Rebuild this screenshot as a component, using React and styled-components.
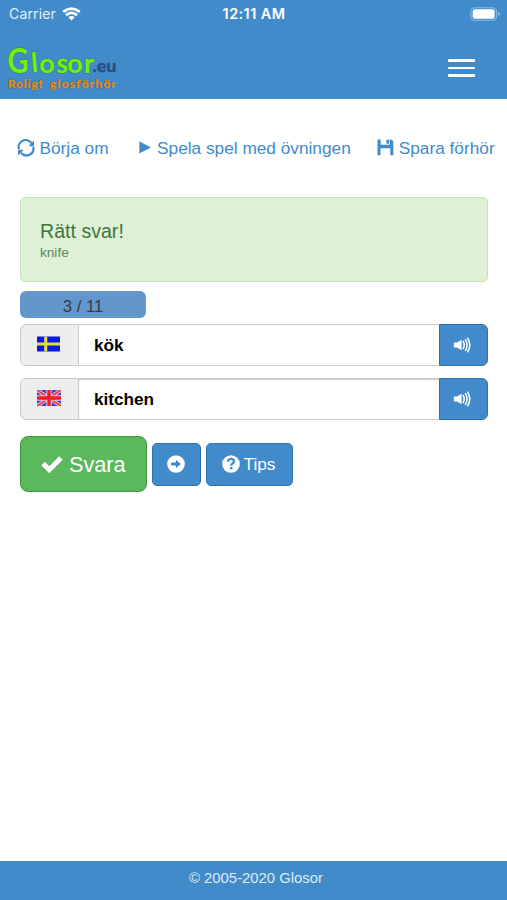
import React from "react";
import styled, { createGlobalStyle } from "styled-components";

const GlobalStyle = createGlobalStyle`
  * { box-sizing: border-box; }
  body { margin: 0; background: #fff; }
`;

const Screen = styled.div`
  width: 507px;
  height: 900px;
  display: flex;
  flex-direction: column;
  overflow: hidden;
  background: #fff;
  font-family: "Liberation Sans", Arial, sans-serif;
  color: #333;
  svg { display: block; flex: none; }
`;

const Header = styled.header`
  height: 98.5px;
  flex: none;
  background: #428bca;
  border-bottom: 1px solid #4f93cd;
`;

const StatusBar = styled.div`
  height: 28px;
  display: grid;
  grid-template-columns: 1fr auto 1fr;
  align-items: center;
  padding: 0 6px 0 9px;
  font-family: Inter, sans-serif;
  color: #fff;
`;

const Carrier = styled.div`
  display: flex;
  align-items: center;
  gap: 6px;
  font-size: 14px;
  line-height: 28px;
  letter-spacing: 0.15px;
  color: #e4f0fa;
`;

const Clock = styled.div`
  margin-right: 2px;
  font-size: 14.4px;
  font-weight: 600;
  line-height: 28px;
  letter-spacing: 0.45px;
`;

const Battery = styled.div`
  justify-self: end;
`;

const NavBar = styled.div`
  height: 70px;
  display: flex;
  justify-content: space-between;
  padding: 12px 32px 0 5px;
`;

const MenuButton = styled.button`
  height: 18px;
  width: 27px;
  margin-top: 19px;
  padding: 0;
  border: 0;
  background: none;
  display: flex;
  flex-direction: column;
  justify-content: space-between;
`;

const MenuLine = styled.span`
  height: 2.6px;
  border-radius: 1px;
  background: #fff;
`;

const Actions = styled.nav`
  display: flex;
  height: 22px;
  margin-top: 38px;
  padding-left: 17px;
`;

const Action = styled.a`
  display: flex;
  align-items: center;
  gap: ${(p) => p.$gap}px;
  margin-right: ${(p) => p.$after || 0}px;
  font-size: 17.25px;
  line-height: 22px;
  white-space: nowrap;
  color: #428bca;
`;

const Main = styled.main`
  flex: 1;
  padding: 38.5px 19px 0 20px;
`;

const Alert = styled.section`
  height: 85px;
  padding: 21px 19px;
  border: 1.5px solid #c3e3b4;
  border-radius: 5px;
  background: #dff0d8;
  color: #3c763d;
`;

const AlertTitle = styled.div`
  font-size: 19.6px;
  line-height: 24px;
`;

const AlertDetail = styled.div`
  font-size: 13.6px;
  line-height: 18px;
  margin-top: 1px;
  color: #55875a;
`;

const Progress = styled.div`
  width: 126px;
  height: 27px;
  margin-top: 9px;
  border-radius: 6px;
  background: #6496cb;
  text-align: center;
  font-size: 16.6px;
  line-height: 31px;
  color: #303b46;
`;

const AnswerRow = styled.div`
  height: 42px;
  display: flex;
  margin-top: ${(p) => p.$top}px;
`;

const FlagCell = styled.div`
  width: 59px;
  display: flex;
  justify-content: center;
  padding: 11px 2px 0 0;
  border: 1.5px solid #ccc;
  border-radius: 6px 0 0 6px;
  background: #eee;
`;

const Field = styled.div`
  flex: 1;
  padding-left: 15px;
  border: solid #ccc;
  border-width: 1.5px 0;
  box-shadow: inset 0 1px 1px rgba(0, 0, 0, ${(p) => (p.$focused ? 0.22 : 0.03)});
  font-size: 17.15px;
  font-weight: 700;
  line-height: 40px;
  color: #000;
`;

const SpeakButton = styled.button`
  width: 49px;
  padding: 0 2px 0 0;
  display: flex;
  align-items: center;
  justify-content: center;
  border: 1.5px solid #3071a9;
  border-radius: 0 6px 6px 0;
  background: #428bca;
`;

const Buttons = styled.div`
  display: flex;
  align-items: center;
  gap: 5px;
  margin-top: 16px;
`;

const Button = styled.button`
  width: ${(p) => p.$width}px;
  height: ${(p) => (p.$large ? 56 : 43)}px;
  padding: ${(p) => (p.$large ? "1px 0 0" : "0 1px 0 0")};
  display: flex;
  align-items: center;
  justify-content: center;
  gap: ${(p) => (p.$large ? 6 : 4)}px;
  border: 1.5px solid ${(p) => (p.$large ? "#439746" : "#3071a9")};
  border-radius: ${(p) => (p.$large ? 8 : 5)}px;
  background: ${(p) => (p.$large ? "#5cb85c" : "#428bca")};
  color: #fff;
  font: ${(p) => (p.$large ? 21.7 : 17.2)}px "Liberation Sans", Arial, sans-serif;
`;

const Footer = styled.footer`
  height: 39.5px;
  flex: none;
  border-top: 1.5px solid #4384b9;
  background: #428bca;
  text-align: center;
  padding-left: 5px;
  font-size: 14.85px;
  line-height: 33px;
  color: #dcecf8;
`;

const Wifi = () => (
  <svg width="19" height="14" viewBox="0 0 19 14" fill="none" stroke="#fff" strokeWidth="2.7">
    <path d="M1.2 4.9Q9.5-1.6 17.8 4.9M4 8.1Q9.5 3.5 15 8.1" />
    <path d="M6.3 10.2Q9.5 7.6 12.7 10.2L9.5 13.5Z" fill="#fff" stroke="none" />
  </svg>
);

const BatteryIcon = () => (
  <svg width="31" height="14" viewBox="0 0 31 14">
    <rect x=".8" y=".8" width="25.8" height="12.4" rx="4" fill="none" stroke="#8dbbe3" strokeWidth="1.1" />
    <rect x="2.7" y="2.3" width="22" height="9.4" rx="2.2" fill="#fff" />
    <path d="M28.2 5v4q2-.8 2-2t-2-2Z" fill="#8dbbe3" />
  </svg>
);

const Logo = () => (
  <svg width="116" height="56" viewBox="0 0 116 56" fontFamily="Lato, sans-serif" strokeLinejoin="round">
    <g paintOrder="stroke">
      <g fontWeight="700" fill="#70f20d" stroke="#34877a" strokeWidth="1.3">
        <text x="2.5" y="32.5" fontSize="34" textLength="21" lengthAdjust="spacingAndGlyphs">G</text>
        <text x="27 34.3 51 62.3 79" y="32.5" rotate="-5 0 3 0 0" fontSize="27">losor</text>
      </g>
      <text x="87.5" y="31.5" fontSize="17" fontWeight="900" textLength="24" lengthAdjust="spacingAndGlyphs" fill="#284d82" stroke="#3973aa" strokeWidth=".6">.eu</text>
      <g fontSize="12" fontWeight="700" fill="#e0962a" stroke="#76643c" strokeWidth="1">
        <text x="3" y="47.5" textLength="35" lengthAdjust="spacing">Roligt</text>
        <text x="45" y="47.5" textLength="66" lengthAdjust="spacing">glosförhör</text>
      </g>
    </g>
  </svg>
);

const RefreshIcon = () => (
  <svg width="19" height="18" viewBox="0 0 19 18">
    <g fill="none" stroke="#428bca" strokeWidth="2.2">
      <path d="M2 10.2A7 7 0 0 1 14.5 4.2M16.3 7.8A7 7 0 0 1 4 13.7" />
    </g>
    <path d="M17 1.6v5.6h-5.6ZM1 16.4v-5.6h5.6Z" fill="#428bca" />
  </svg>
);

const PlayIcon = () => (
  <svg width="12" height="13" viewBox="0 0 12 13"><path d="M.3.3 12 6.4.3 12.5Z" fill="#428bca" /></svg>
);

const SaveIcon = () => (
  <svg width="17" height="17" viewBox="0 0 17 17">
    <path d="M.5.5h3.2v5.2h9V.5h1.8l1.8 1.8v13.9h-3V9.3H3.5v6.9h-3Z" fill="#428bca" />
    <path d="M9.4.7H12v4H9.4Z" fill="#428bca" />
  </svg>
);

const SpeakerIcon = () => (
  <svg width="19" height="18" viewBox="0 0 19 18">
    <path d="M.8 6.5h3.4L8.6 3.8v10.4l-4.4-2.7H.8Z" fill="#fff" />
    <g fill="none" stroke="#fff" strokeWidth="1.5">
      <path d="M10 4.8q2.3 4.2 0 8.4M12.2 3.1q3.7 5.9 0 11.8M14.4 1.6q4.9 7.4 0 14.8" />
    </g>
  </svg>
);

const SwedishFlag = () => (
  <svg width="23" height="16" viewBox="0 0 23 16">
    <path d="M0 .5h23v15H0Z" fill="#0b19e8" />
    <path d="M7.2.5h3v15h-3ZM0 6.6h23v3H0Z" fill="#e4df36" />
  </svg>
);

const BritishFlag = () => (
  <svg width="24" height="16" viewBox="0 0 24 16">
    <path d="M0 0h24v16H0Z" fill="#3541d6" />
    <path d="m0 0 24 16M24 0 0 16" stroke="#f2c3d4" strokeWidth="3.6" />
    <path d="m0 0 24 16M24 0 0 16" stroke="#ef3448" strokeWidth="1.8" />
    <path d="M12 0v16M0 8h24" stroke="#fbc8d2" strokeWidth="5.4" />
    <path d="M12 0v16M0 8h24" stroke="#f21a2b" strokeWidth="3.4" />
  </svg>
);

const CheckIcon = () => (
  <svg width="22" height="18" viewBox="0 0 22 18">
    <path d="m.3 9.5 3.5-3.7 4.5 4.4L18.2.3l3.5 3.4L8.3 17.2Z" fill="#fff" />
  </svg>
);

const NextIcon = () => (
  <svg width="18" height="18" viewBox="0 0 18 18">
    <circle cx="9" cy="9" r="8.8" fill="#fff" />
    <path d="M4.2 7.4h4.7V4.7L13.8 9l-4.9 4.3v-2.7H4.2Z" fill="#428bca" />
  </svg>
);

const HelpIcon = () => (
  <svg width="18" height="18" viewBox="0 0 18 18">
    <circle cx="9" cy="9" r="8.8" fill="#fff" />
    <path d="M6 6.8C6 2.8 12.4 3 12 6.7c-.2 1.8-2.8 1.8-2.8 4" fill="none" stroke="#428bca" strokeWidth="2.3" />
    <path d="M7.9 12h2.5v2.3H7.9Z" fill="#428bca" />
  </svg>
);

const AnswerField = ({ top, flag, word, focused }) => (
  <AnswerRow $top={top}>
    <FlagCell>{flag}</FlagCell>
    <Field $focused={focused}>{word}</Field>
    <SpeakButton aria-label="Lyssna"><SpeakerIcon /></SpeakButton>
  </AnswerRow>
);

export default function App() {
  return (
    <Screen>
      <GlobalStyle />
      <Header>
        <StatusBar>
          <Carrier>Carrier <Wifi /></Carrier>
          <Clock>12:11 AM</Clock>
          <Battery><BatteryIcon /></Battery>
        </StatusBar>
        <NavBar>
          <Logo />
          <MenuButton aria-label="Meny"><MenuLine /><MenuLine /><MenuLine /></MenuButton>
        </NavBar>
      </Header>
      <Actions>
        <Action $gap={3.5} $after={30}><RefreshIcon />Börja om</Action>
        <Action $gap={6.5} $after={26}><PlayIcon />Spela spel med övningen</Action>
        <Action $gap={5}><SaveIcon />Spara förhör</Action>
      </Actions>
      <Main>
        <Alert>
          <AlertTitle>Rätt svar!</AlertTitle>
          <AlertDetail>knife</AlertDetail>
        </Alert>
        <Progress>3 / 11</Progress>
        <AnswerField top={6} flag={<SwedishFlag />} word="kök" />
        <AnswerField top={12} flag={<BritishFlag />} word="kitchen" focused />
        <Buttons>
          <Button $large $width={126.5}><CheckIcon />Svara</Button>
          <Button $width={49} aria-label="Nästa"><NextIcon /></Button>
          <Button $width={87}><HelpIcon />Tips</Button>
        </Buttons>
      </Main>
      <Footer>© 2005-2020 Glosor</Footer>
    </Screen>
  );
}
